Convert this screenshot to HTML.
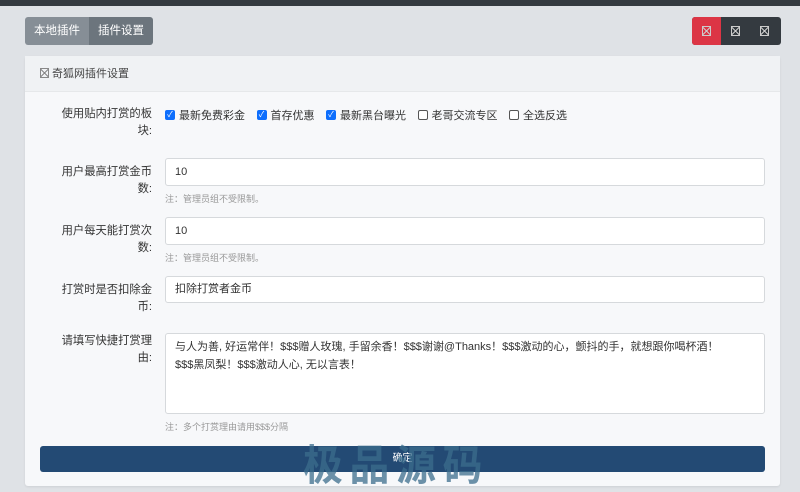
<!DOCTYPE html>
<html><head><meta charset="utf-8"><style>
*{box-sizing:border-box;margin:0;padding:0}
body{width:800px;height:492px;background:#dfe2e6;font-family:"Liberation Sans","Noto Sans CJK SC",sans-serif;font-size:11px;color:#333;position:relative;overflow:hidden}
.top{position:absolute;left:0;top:0;width:800px;height:6px;background:#343a40}
.tabs{position:absolute;left:25px;top:17px;height:28px;display:flex;border-radius:3px;overflow:hidden}
.tabs div{color:#fff;padding:0 9px;line-height:28px;font-size:11.5px}
.t1{background:#868e96}.t2{background:#6c757d}
.btns{position:absolute;left:692px;top:17px;height:28px;width:89px;display:flex;border-radius:3px;overflow:hidden;background:#343a40}
.btns div{width:29px;display:flex;align-items:center;justify-content:center}
.btns div:first-child{background:#dc3545}
.ic{width:9px;height:10px;border:1px solid #ccc;position:relative;background:linear-gradient(45deg,transparent 45%,#ccc 45%,#ccc 55%,transparent 55%),linear-gradient(-45deg,transparent 45%,#ccc 45%,#ccc 55%,transparent 55%)}
.card{position:absolute;left:25px;top:56px;width:755px;height:430px;background:#f7f8fa;border-radius:3px;box-shadow:0 1px 2px rgba(0,0,0,.08)}
.hd{height:36px;background:#f0f2f4;border-bottom:1px solid #e6e8ea;line-height:36px;padding-left:15px;font-size:11px;color:#444}
.hd .ic{display:inline-block;vertical-align:-1px;border-color:#888;background:linear-gradient(45deg,transparent 45%,#888 45%,#888 55%,transparent 55%),linear-gradient(-45deg,transparent 45%,#888 45%,#888 55%,transparent 55%);margin-right:3px}
.lab{position:absolute;width:94px;left:33px;text-align:right;line-height:17px;font-size:11.3px;color:#333}
.inp{position:absolute;left:140px;width:600px;background:#fff;border:1px solid #d6d9dc;border-radius:3px;padding-left:9px;font-size:11px;color:#333}
.note{position:absolute;left:140px;font-size:9px;color:#999}
.cbs{position:absolute;left:140px;top:51px;display:flex;align-items:center;font-size:11px}
.cb{width:10px;height:10px;border-radius:2px;background:#0d6efd;margin-right:4px;display:inline-flex;align-items:center;justify-content:center;color:#fff;font-size:8px;line-height:10px}
.cb.off{background:#fff;border:1px solid #555}
.cbs span.l{margin-right:11.5px}
.btn{position:absolute;left:15px;top:390px;width:725px;height:26px;background:#234a74;border-radius:3px;color:#fff;text-align:center;line-height:26px;font-size:10px}
.wm{position:absolute;left:303px;top:440px;font-size:42px;font-weight:bold;color:rgba(60,110,140,.75);letter-spacing:7px;line-height:52px;transform:scaleX(0.95);transform-origin:left}
</style></head><body>
<div class="top"></div>
<div class="tabs"><div class="t1">本地插件</div><div class="t2">插件设置</div></div>
<div class="btns"><div><span class="ic"></span></div><div><span class="ic"></span></div><div><span class="ic"></span></div></div>
<div class="card">
<div class="hd"><span class="ic"></span>奇狐网插件设置</div>
<div class="lab" style="top:50px">使用贴内打赏的板块:</div>
<div class="cbs"><span class="cb">✓</span><span class="l">最新免费彩金</span><span class="cb">✓</span><span class="l">首存优惠</span><span class="cb">✓</span><span class="l">最新黑台曝光</span><span class="cb off"></span><span class="l">老哥交流专区</span><span class="cb off"></span><span class="l">全选反选</span></div>
<div class="lab" style="top:108px">用户最高打赏金币数:</div>
<div class="inp" style="top:102px;height:28px;line-height:26px">10</div>
<div class="note" style="top:136px">注：管理员组不受限制。</div>
<div class="lab" style="top:167px">用户每天能打赏次数:</div>
<div class="inp" style="top:161px;height:28px;line-height:26px">10</div>
<div class="note" style="top:195px">注：管理员组不受限制。</div>
<div class="lab" style="top:226px">打赏时是否扣除金币:</div>
<div class="inp" style="top:220px;height:27px;line-height:25px">扣除打赏者金币</div>
<div class="lab" style="top:277px">请填写快捷打赏理由:</div>
<div class="inp" style="top:277px;height:81px;line-height:18px;padding-top:4px">与人为善, 好运常伴！$$$赠人玫瑰, 手留余香！$$$谢谢@Thanks！$$$激动的心，颤抖的手，就想跟你喝杯酒！<br>$$$黑凤梨！$$$激动人心, 无以言表！</div>
<div class="note" style="top:364px">注：多个打赏理由请用$$$分隔</div>
<div class="btn">确定</div>
</div>
<div class="wm">极品源码</div>
</body></html>
